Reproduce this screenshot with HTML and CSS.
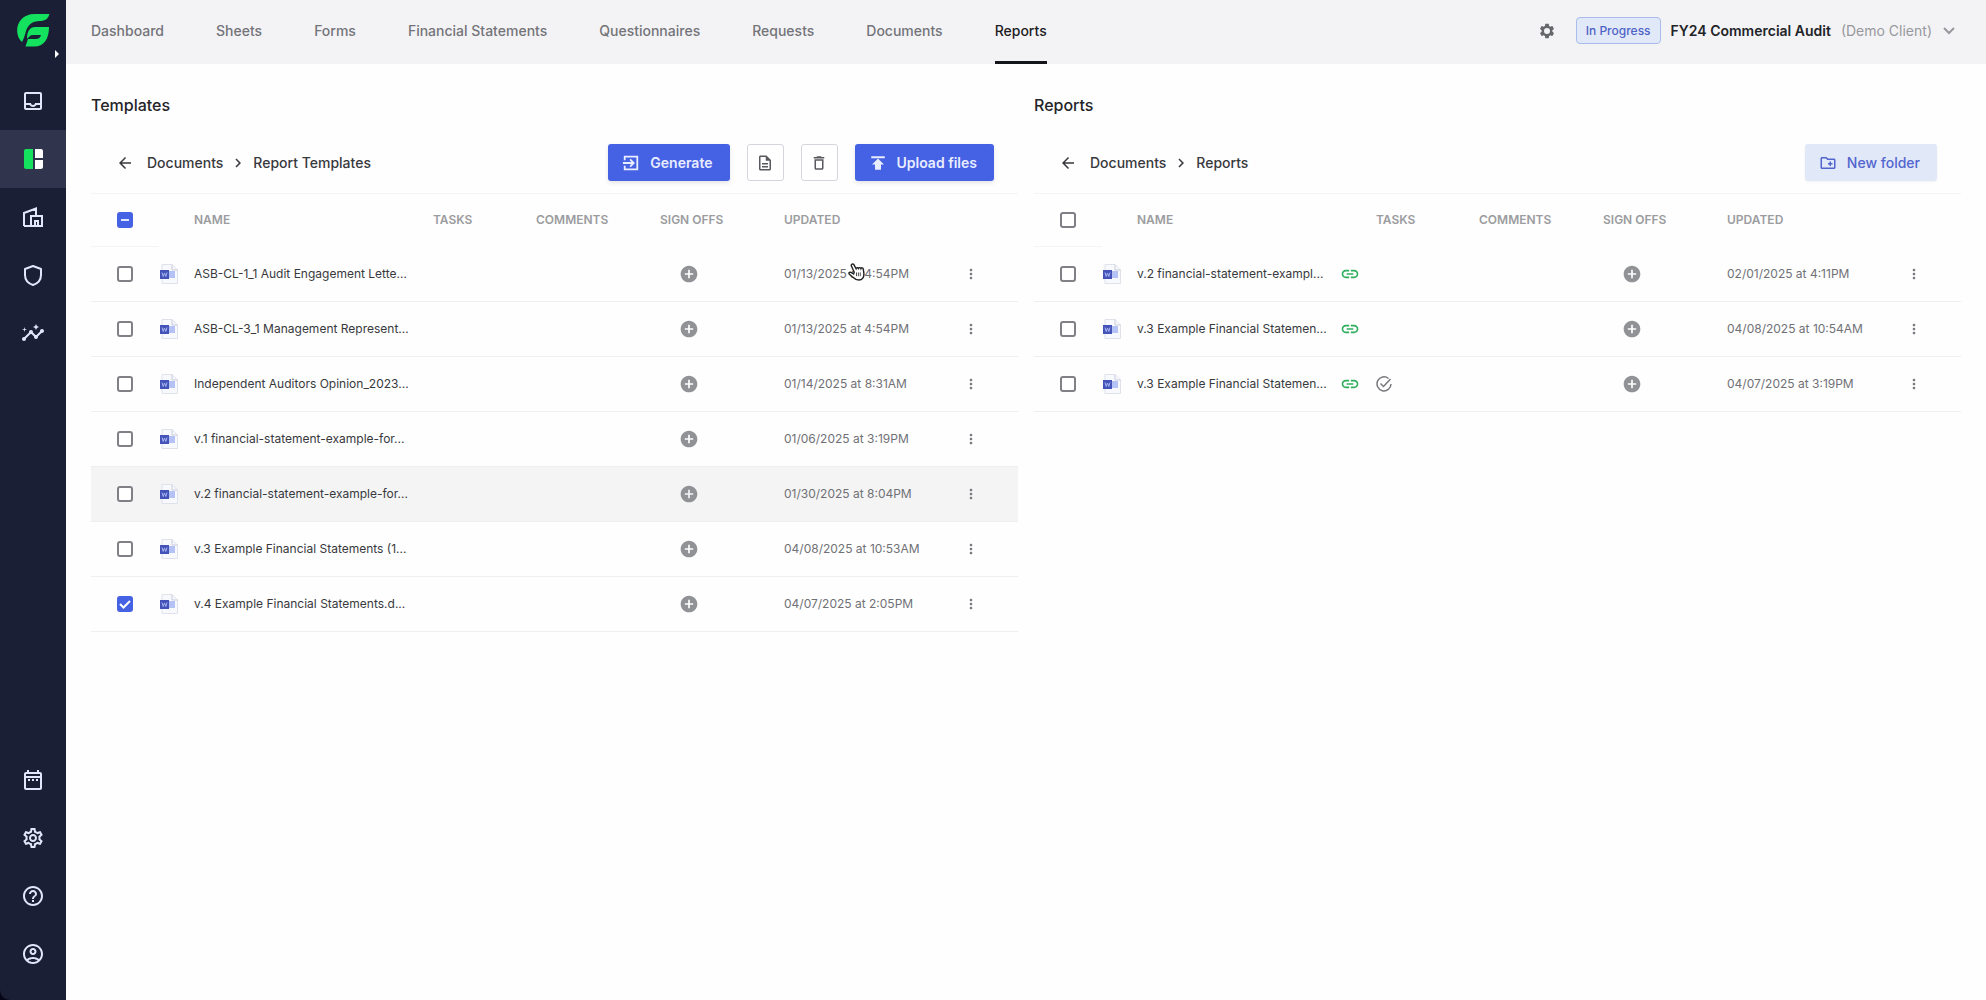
FILE: index.html
```html
<!DOCTYPE html>
<html lang="en">
<head>
<meta charset="utf-8">
<meta name="viewport" content="width=device-width, initial-scale=1">
<title>Reports – FY24 Commercial Audit</title>
<link rel="stylesheet" href="styles.css">
</head>
<body>
<svg class="sprite" aria-hidden="true">
  <symbol id="i-doc" viewBox="0 0 20 20">
    <path d="M3 .5h10l5.500 5.500v13.500H3z" fill="#f8f9fd" stroke="#dfe1eb"/>
    <path d="M13 .5V6h5.500" fill="none" stroke="#c9ccdb"/>
    <path d="M10 7h6v7h-6z" fill="#b4c2f5"/>
    <path d="M1 6h9v9H1z" fill="#4453b8"/>
    <path d="M3 8.500l1.200 4 1.300-3.500 1.300 3.500L8 8.500" fill="none" stroke="#a9b5f0"/>
  </symbol>
  <symbol id="i-plus" viewBox="0 0 24 24"><path fill="currentColor" d="M12 2C6.480 2 2 6.480 2 12s4.480 10 10 10 10-4.480 10-10S17.520 2 12 2zm5 11h-4v4h-2v-4H7v-2h4V7h2v4h4v2z"/></symbol>
  <symbol id="i-more" viewBox="0 0 24 24"><path fill="currentColor" d="M12 8c1.100 0 2-.9 2-2s-.9-2-2-2-2 .9-2 2 .9 2 2 2zm0 2c-1.100 0-2 .9-2 2s.9 2 2 2 2-.9 2-2-.9-2-2-2zm0 6c-1.100 0-2 .9-2 2s.9 2 2 2 2-.9 2-2-.9-2-2-2z"/></symbol>
  <symbol id="i-link" viewBox="0 0 24 24"><path fill="currentColor" d="M3.900 12c0-1.710 1.390-3.100 3.100-3.100h4V7H7c-2.760 0-5 2.240-5 5s2.240 5 5 5h4v-1.900H7c-1.710 0-3.100-1.390-3.100-3.100zM8 13h8v-2H8v2zm9-6h-4v1.900h4c1.710 0 3.100 1.390 3.100 3.100s-1.390 3.100-3.100 3.100h-4V17h4c2.760 0 5-2.240 5-5s-2.240-5-5-5z"/></symbol>
  <symbol id="i-back" viewBox="0 0 24 24"><path fill="currentColor" d="M20 11H7.830l5.590-5.590L12 4l-8 8 8 8 1.410-1.410L7.830 13H20v-2z"/></symbol>
  <symbol id="i-next" viewBox="0 0 24 24"><path fill="currentColor" d="M10 6L8.590 7.410 13.170 12l-4.580 4.590L10 18l6-6z"/></symbol>
</svg>

<div class="app">
  <aside class="sidebar">
    <a class="logo" href="#" aria-label="Home">
      <svg viewBox="0 0 34 34"><g fill="#14e25f"><path d="M33.500 1C32 6 29 8 24 8c-8 0-12 4-14 10-1 4-2 7-4 11C-3 21 0 1 19 1z"/><path d="M33 14c0 12-5 19.500-15 19.500H9.500L12 26h7c4 0 5-1 6-4h-8c-3 0-4 2-6 4 0-8 3-12 8-12z"/></g></svg>
    </a>
    <button class="expand" type="button" aria-label="Expand menu"></button>
    <nav class="rail" aria-label="Workspace">
      <a href="#" aria-label="Inbox"><svg viewBox="0 0 24 24"><path fill="currentColor" d="M19 3H5c-1.100 0-2 .9-2 2v14c0 1.100.9 2 2 2h14c1.100 0 2-.9 2-2V5c0-1.100-.9-2-2-2zm0 16H5v-3h3.560c.69 1.190 1.970 2 3.450 2s2.750-.81 3.450-2H19v3zm0-5h-4.990c0 1.100-.9 2-2 2s-2-.9-2-2H5V5h14v9z"/></svg></a>
      <a href="#" class="active" aria-label="Engagements" aria-current="page"><svg viewBox="0 0 24 24"><path fill="#14e25f" d="M12 22H5c-1.100 0-2-.9-2-2V4c0-1.100.9-2 2-2h7z"/><path fill="#fff" d="M14 2h6c1.100 0 2 .9 2 2v7h-8zM14 13h8v7c0 1.100-.9 2-2 2h-6z"/></svg></a>
      <a href="#" aria-label="Clients"><svg viewBox="0 0 24 24"><path fill="none" stroke="currentColor" stroke-width="2" d="M3 21V8l12-4.500V10M3 21h18V11H10v10M14 21v-5h3v5"/></svg></a>
      <a href="#" aria-label="Security"><svg viewBox="0 0 24 24"><path fill="none" stroke="currentColor" stroke-width="2" stroke-linejoin="round" d="M12 3l8 3v6c0 5-3.500 8.500-8 10-4.500-1.500-8-5-8-10V6z"/></svg></a>
      <a href="#" aria-label="Insights"><svg viewBox="0 0 24 24"><path fill="currentColor" d="M21 8c-1.450 0-2.260 1.440-1.930 2.510l-3.550 3.560c-.3-.09-.74-.09-1.040 0l-2.550-2.550C12.270 10.450 11.460 9 10 9c-1.450 0-2.270 1.440-1.930 2.520l-4.560 4.550C2.440 15.740 1 16.550 1 18c0 1.100.9 2 2 2 1.450 0 2.260-1.440 1.930-2.510l4.550-4.560c.3.090.74.090 1.040 0l2.550 2.550C12.730 16.550 13.540 18 15 18c1.450 0 2.270-1.440 1.930-2.520l3.560-3.550C21.560 12.260 23 11.450 23 10c0-1.100-.9-2-2-2zM15 9l.94-2.070L18 6l-2.060-.93L15 3l-.92 2.070L12 6l2.080.93zM3.500 11L4 9l2-.5L4 8l-.5-2L3 8l-2 .5L3 9z"/></svg></a>
    </nav>
    <nav class="rail rail-bottom" aria-label="Account">
      <a href="#" aria-label="Calendar"><svg viewBox="0 0 24 24"><path fill="currentColor" d="M19 4h-1V2h-2v2H8V2H6v2H5c-1.100 0-2 .9-2 2v14c0 1.100.9 2 2 2h14c1.100 0 2-.9 2-2V6c0-1.100-.9-2-2-2zm0 16H5V10h14v10zM5 8V6h14v2zM7 11h2v2H7zM11 11h2v2h-2zM15 11h2v2h-2z"/></svg></a>
      <a href="#" aria-label="Settings"><svg viewBox="0 0 24 24"><path fill="currentColor" d="M19.430 12.980c.04-.32.07-.64.07-.98s-.03-.66-.07-.98l2.110-1.650c.19-.15.24-.42.12-.64l-2-3.460c-.09-.16-.26-.25-.44-.25-.06 0-.12.010-.17.030l-2.490 1c-.52-.4-1.080-.73-1.690-.98l-.38-2.650C14.460 2.180 14.250 2 14 2h-4c-.25 0-.46.18-.49.42l-.38 2.650c-.61.25-1.170.59-1.690.98l-2.490-1c-.06-.02-.12-.03-.18-.03-.17 0-.34.09-.43.25l-2 3.460c-.13.22-.07.49.12.64l2.110 1.650c-.04.32-.07.65-.07.98s.03.66.07.98l-2.110 1.650c-.19.15-.24.42-.12.64l2 3.460c.09.16.26.25.44.25.06 0 .12-.01.17-.03l2.490-1c.52.4 1.080.73 1.690.98l.38 2.650c.03.24.24.42.49.42h4c.25 0 .46-.18.49-.42l.38-2.650c.61-.25 1.170-.59 1.690-.98l2.490 1c.06.02.12.03.18.03.17 0 .34-.09.43-.25l2-3.460c.12-.22.07-.49-.12-.64l-2.110-1.650zm-1.980-1.710c.04.31.05.52.05.73s-.02.43-.05.73l-.14 1.130.89.7 1.080.84-.7 1.210-1.270-.51-1.040-.42-.9.68c-.43.32-.84.56-1.250.73l-1.060.43-.16 1.130-.2 1.350h-1.400l-.19-1.350-.16-1.130-1.060-.43c-.43-.18-.83-.41-1.230-.71l-.91-.7-1.060.43-1.270.51-.7-1.210 1.080-.84.89-.7-.14-1.130c-.03-.31-.05-.54-.05-.74s.02-.43.05-.73l.14-1.130-.89-.7-1.080-.84.7-1.210 1.270.51 1.040.42.9-.68c.43-.32.84-.56 1.250-.73l1.060-.43.16-1.130.2-1.350h1.390l.19 1.350.16 1.130 1.060.43c.43.18.83.41 1.230.71l.91.7 1.060-.43 1.270-.51.7 1.210-1.070.85-.89.7.14 1.130zM12 8c-2.210 0-4 1.790-4 4s1.790 4 4 4 4-1.790 4-4-1.790-4-4-4zm0 6c-1.100 0-2-.9-2-2s.9-2 2-2 2 .9 2 2-.9 2-2 2z"/></svg></a>
      <a href="#" aria-label="Help"><svg viewBox="0 0 24 24"><path fill="currentColor" d="M11 18h2v-2h-2v2zm1-16C6.480 2 2 6.480 2 12s4.480 10 10 10 10-4.480 10-10S17.520 2 12 2zm0 18c-4.410 0-8-3.590-8-8s3.590-8 8-8 8 3.590 8 8-3.590 8-8 8zm0-14c-2.210 0-4 1.790-4 4h2c0-1.100.9-2 2-2s2 .9 2 2c0 2-3 1.750-3 5h2c0-2.250 3-2.500 3-5 0-2.210-1.790-4-4-4z"/></svg></a>
      <a href="#" aria-label="Profile"><svg viewBox="0 0 24 24"><path fill="currentColor" d="M12 2C6.480 2 2 6.480 2 12s4.480 10 10 10 10-4.480 10-10S17.520 2 12 2zM7.350 18.500C8.660 17.560 10.260 17 12 17s3.340.56 4.650 1.500C15.340 19.440 13.740 20 12 20s-3.340-.56-4.650-1.500zm10.790-1.380C16.450 15.800 14.320 15 12 15s-4.450.8-6.140 2.120C4.700 15.730 4 13.950 4 12c0-4.420 3.580-8 8-8s8 3.580 8 8c0 1.950-.7 3.730-1.860 5.120zM12 6c-1.930 0-3.500 1.570-3.500 3.500S10.070 13 12 13s3.500-1.570 3.500-3.500S13.930 6 12 6zm0 5c-.83 0-1.500-.67-1.500-1.500S11.170 8 12 8s1.500.67 1.500 1.500S12.830 11 12 11z"/></svg></a>
    </nav>
  </aside>

  <div class="page">
    <header class="topbar">
      <nav class="tabs" aria-label="Engagement">
        <a href="#">Dashboard</a><a href="#">Sheets</a><a href="#">Forms</a><a href="#">Financial Statements</a><a href="#">Questionnaires</a><a href="#">Requests</a><a href="#">Documents</a><a href="#" class="current" aria-current="page">Reports</a>
      </nav>
      <div class="engagement">
        <button class="gear" type="button" aria-label="Engagement settings"><svg viewBox="0 0 24 24"><path fill="currentColor" fill-rule="evenodd" d="M19.140 12.940c.04-.3.060-.61.060-.94 0-.32-.02-.64-.07-.94l2.030-1.580c.18-.14.23-.41.12-.61l-1.920-3.320c-.12-.22-.37-.29-.59-.22l-2.390.96c-.5-.38-1.030-.7-1.620-.94L14.400 2.810c-.04-.24-.24-.41-.48-.41h-3.840c-.24 0-.43.17-.47.41L9.250 5.350c-.59.24-1.130.57-1.620.94l-2.390-.96c-.22-.08-.47 0-.59.22L2.740 8.870c-.12.21-.08.47.12.61l2.030 1.580c-.05.3-.09.63-.09.94s.02.64.07.94l-2.030 1.580c-.18.14-.23.41-.12.61l1.920 3.320c.12.22.37.29.59.22l2.390-.96c.5.38 1.030.7 1.620.94l.36 2.540c.05.24.24.41.48.41h3.840c.24 0 .44-.17.47-.41l.36-2.540c.59-.24 1.130-.56 1.620-.94l2.390.96c.22.080.47 0 .59-.22l1.920-3.320c.12-.22.070-.47-.12-.61zM12 16a4 4 0 1 1 0-8 4 4 0 0 1 0 8z"/></svg></button>
        <span class="status">In Progress</span>
        <button class="picker" type="button"><span class="job">FY24 Commercial Audit</span><span class="client">(Demo Client)</span><svg viewBox="0 0 14 14"><path fill="none" stroke="currentColor" stroke-width="2" d="M2 4l5 5 5-5"/></svg></button>
      </div>
    </header>

    <main class="panels">
      <section class="panel">
        <h2>Templates</h2>
        <div class="toolbar">
          <nav class="crumbs" aria-label="Template folder">
            <a href="#" aria-label="Back"><svg class="i18"><use href="#i-back"/></svg></a>
            <a href="#">Documents</a><svg class="i18"><use href="#i-next"/></svg><span>Report Templates</span>
          </nav>
          <div class="actions">
            <button class="btn primary" type="button"><svg viewBox="0 0 20 20"><path fill="none" stroke="currentColor" stroke-width="2" d="M3 7V3h14v14H3v-4M1 10h12M9 6l4 4-4 4"/></svg>Generate</button>
            <button class="btn icon" type="button" aria-label="New template"><svg viewBox="0 0 24 24"><path fill="currentColor" d="M8 16h8v2H8zm0-4h8v2H8zm6-10H6c-1.100 0-2 .9-2 2v16c0 1.100.89 2 1.990 2H18c1.100 0 2-.9 2-2V8l-6-6zm4 18H6V4h7v5h5v11z"/></svg></button>
            <button class="btn icon" type="button" aria-label="Delete"><svg viewBox="0 0 24 24"><path fill="currentColor" d="M6 19c0 1.100.9 2 2 2h8c1.100 0 2-.9 2-2V7H6v12zM8 9h8v10H8V9zm7.500-5l-1-1h-5l-1 1H5v2h14V4h-3.500z"/></svg></button>
            <button class="btn primary" type="button"><svg viewBox="0 0 24 24"><path fill="currentColor" d="M3 3h18v2.500H3zM12 6l8 8h-4v7H8v-7H4z"/></svg>Upload files</button>
          </div>
        </div>
        <table class="files" id="templates">
          <colgroup><col class="c-check"><col class="c-type"><col class="c-name"><col class="c-tasks"><col class="c-comments"><col class="c-sign"><col class="c-updated"><col class="c-more"></colgroup>
          <thead><tr><th><input type="checkbox" class="mixed" aria-label="Select all templates"></th><th></th><th>NAME</th><th>TASKS</th><th>COMMENTS</th><th>SIGN OFFS</th><th>UPDATED</th><th></th></tr></thead>
          <tbody></tbody>
        </table>
      </section>

      <section class="panel">
        <h2>Reports</h2>
        <div class="toolbar">
          <nav class="crumbs" aria-label="Report folder">
            <a href="#" aria-label="Back"><svg class="i18"><use href="#i-back"/></svg></a>
            <a href="#">Documents</a><svg class="i18"><use href="#i-next"/></svg><span>Reports</span>
          </nav>
          <div class="actions">
            <button class="btn soft" type="button"><svg viewBox="0 0 24 24"><path fill="currentColor" d="M20 6h-8l-2-2H4c-1.110 0-1.990.89-1.990 2L2 18c0 1.110.89 2 2 2h16c1.110 0 2-.89 2-2V8c0-1.110-.89-2-2-2zm0 12H4V6h5.170l2 2H20v10zm-8-4h2v2h2v-2h2v-2h-2v-2h-2v2h-2z"/></svg>New folder</button>
          </div>
        </div>
        <table class="files" id="reports">
          <colgroup><col class="c-check"><col class="c-type"><col class="c-name"><col class="c-tasks"><col class="c-comments"><col class="c-sign"><col class="c-updated"><col class="c-more"></colgroup>
          <thead><tr><th><input type="checkbox" aria-label="Select all reports"></th><th></th><th>NAME</th><th>TASKS</th><th>COMMENTS</th><th>SIGN OFFS</th><th>UPDATED</th><th></th></tr></thead>
          <tbody></tbody>
        </table>
      </section>
    </main>
  </div>
</div>
<script src="app.js"></script>
</body>
</html>
```
FILE: styles.css
```css
* { box-sizing: border-box; }
body { margin: 0; background: #050616; color: #38393d; font: 12px/20px Inter, "Liberation Sans", sans-serif; }
a { color: inherit; text-decoration: none; }
button { display: block; font: inherit; color: inherit; border: 0; padding: 0; background: none; cursor: pointer; }
svg { display: block; flex: none; }
.sprite { position: absolute; width: 0; height: 0; }

.app { display: flex; min-height: 100vh; }
.page { flex: 1; min-width: 0; background: #fefefe; }

/* Left rail */
.sidebar { position: relative; width: 66px; flex: none; display: flex; flex-direction: column; background: #1b1f36; color: #e3e6fb; border-bottom-left-radius: 10px; }
.logo { display: flex; justify-content: center; height: 72px; padding-top: 13px; }
.logo svg { width: 34px; height: 34px; }
.expand { position: absolute; left: 55px; top: 50px; border: solid transparent; border-width: 4px 0 4px 4px; border-left-color: #fff; }
.rail { display: flex; flex-direction: column; }
.rail a { display: flex; align-items: center; justify-content: center; height: 58px; }
.rail svg { width: 24px; height: 24px; }
.rail .active { background: #31344d; }
.rail-bottom { margin-top: auto; padding-bottom: 17px; }

/* Top bar */
.topbar { display: flex; justify-content: space-between; height: 64px; padding: 0 30px 0 25px; background: #f3f3f6; }
.tabs { display: flex; gap: 52px; font-size: 14px; font-weight: 500; color: #737479; }
.tabs a { display: flex; align-items: center; border-bottom: 3px solid transparent; white-space: nowrap; }
.tabs .current { color: #1d1d22; border-color: #15151c; }
.engagement { display: flex; align-items: center; white-space: nowrap; padding-bottom: 3px; }
.gear { color: #66676b; margin-right: 20px; }
.gear svg { width: 18px; height: 18px; }
.status { height: 27px; padding: 0 9px; margin-right: 10px; border: 1px solid #a9bcec; border-radius: 4px; background: #e1e9f8; color: #4f62c6; font-weight: 500; line-height: 25px; }
.picker { display: flex; align-items: center; gap: 10px; font-size: 14px; }
.picker .job { color: #222327; font-weight: 600; }
.picker .client, .picker svg { color: #97989c; }
.picker svg { width: 14px; height: 14px; }

/* Panels */
.panels { display: grid; grid-template-columns: 1fr 1fr; gap: 16px; padding: 27px 25px; }
.panel { min-width: 0; }
h2 { margin: 0; color: #242428; font-size: 16px; line-height: 28px; font-weight: 500; }
.toolbar { display: flex; align-items: center; justify-content: space-between; height: 74px; padding: 25px 24px 12px 25px; }
.crumbs { display: flex; align-items: center; gap: 6px; font-size: 14px; font-weight: 500; white-space: nowrap; }
.crumbs a:first-child { margin-right: 7px; }
.i18 { width: 18px; height: 18px; }
.actions { display: flex; gap: 17px; }
.btn { display: flex; align-items: center; height: 37px; gap: 10px; padding: 0 17px 0 14px; border-radius: 3px; font-size: 14px; font-weight: 600; white-space: nowrap; }
.btn svg { width: 18px; height: 18px; }
.primary { background: #4561e4; color: #e9edff; box-shadow: 0 2px 4px #0000001a; }
.icon { width: 37px; padding: 0; justify-content: center; border: 1px solid #d5d5dd; color: #58595e; background: #fff; }
.soft { font-weight: 500; background: #e1e8f7; color: #5265cf; box-shadow: 0 1px 3px #0000000d; }

/* File tables */
.files { width: 100%; table-layout: fixed; border-collapse: collapse; border-top: 1px solid #f4f4f5; }
.c-check { width: 68px; } .c-type { width: 35px; } .c-name { width: 239px; } .c-tasks { width: 103px; }
.c-comments { width: 124px; } .c-sign { width: 124px; } .c-updated { width: 179px; }
.files th, .files td { padding: 0; text-align: left; }
.files th { height: 53px; color: #9b9ca0; font-weight: 600; }
.files td { height: 55px; border-bottom: 1px solid #efeff0; white-space: nowrap; }
.files th:first-child { border-bottom: 1px solid #f4f4f5; }
.files th:first-child, .files td:first-child { padding-left: 26px; }
.hovered { background: #f4f4f5; }
.files input { appearance: none; display: block; width: 16px; height: 16px; margin: 0; border: 2px solid #808186; border-radius: 3px; background: #fff center/12px 12px no-repeat; }
.files input:checked, .files input.mixed { border-color: #4561e4; background-color: #4561e4; }
.files input.mixed { background-image: linear-gradient(#dfe5ff, #dfe5ff); background-size: 8px 2px; }
.files input:checked { background-image: url("data:image/svg+xml,%3Csvg xmlns='http://www.w3.org/2000/svg' viewBox='0 0 12 12'%3E%3Cpath d='M1 6l3.500 3.500L11 3' fill='none' stroke='white' stroke-width='2'/%3E%3C/svg%3E"); }
.doc { width: 20px; height: 20px; }
.name { display: flex; align-items: center; justify-content: space-between; padding-right: 16px; }
.linked { width: 20px; height: 20px; color: #2fae5e; }
.task { width: 16px; height: 16px; color: #77787c; }
.sign svg { width: 20px; height: 20px; color: #919296; margin-left: 19px; }
.updated { color: #707176; }
.more svg { width: 16px; height: 16px; color: #77787d; }
.cell { position: relative; }
.pointer { position: absolute; left: 64px; top: -2px; width: 17px; height: 19px; }
```
FILE: app.js
```js
const templates = [
  { name: "ASB-CL-1_1 Audit Engagement Lette...", updated: "01/13/2025 at 4:54PM", pointer: true },
  { name: "ASB-CL-3_1 Management Represent...", updated: "01/13/2025 at 4:54PM" },
  { name: "Independent Auditors Opinion_2023...", updated: "01/14/2025 at 8:31AM" },
  { name: "v.1 financial-statement-example-for...", updated: "01/06/2025 at 3:19PM" },
  { name: "v.2 financial-statement-example-for...", updated: "01/30/2025 at 8:04PM", hovered: true },
  { name: "v.3 Example Financial Statements (1...", updated: "04/08/2025 at 10:53AM" },
  { name: "v.4 Example Financial Statements.d...", updated: "04/07/2025 at 2:05PM", checked: true }
];
const reports = [
  { name: "v.2 financial-statement-exampl...", updated: "02/01/2025 at 4:11PM", linked: true },
  { name: "v.3 Example Financial Statemen...", updated: "04/08/2025 at 10:54AM", linked: true },
  { name: "v.3 Example Financial Statemen...", updated: "04/07/2025 at 3:19PM", linked: true, task: true }
];

const link = '<svg class="linked"><use href="#i-link"/></svg>';
const task = '<svg class="task" viewBox="0 0 16 16"><path d="M12.500 2.500A7 7 0 1 0 15 8M4.500 7.500l3 3 7-7.500" fill="none" stroke="currentColor" stroke-width="1.500"/></svg>';
const hand = '<svg class="pointer" viewBox="0 0 18 20"><path d="M6.500 10.500L3.500 4a1.500 1.500 0 0 1 2.700-1.200L8.500 7a1.400 1.400 0 0 1 2.600-.3 1.400 1.400 0 0 1 2.600.2 1.300 1.300 0 0 1 2.500.6l.6 4.500c.3 4-1.500 7-5.300 7s-5-1.500-7-3.500l-3-2.500c-1.300-1.500.3-2.700 1.500-2l3 1.500z" fill="#fff" stroke="#222" stroke-width="1.500"/><path d="M9 11v4M11 11v4M13 11v4" stroke="#444"/></svg>';

const row = f => `<tr class="${f.hovered ? "hovered" : ""}">
  <td><input type="checkbox" aria-label="Select ${f.name}" ${f.checked ? "checked" : ""}></td>
  <td><svg class="doc"><use href="#i-doc"/></svg></td>
  <td><div class="name"><a href="#">${f.name}</a>${f.linked ? link : ""}</div></td>
  <td>${f.task ? task : ""}</td>
  <td></td>
  <td class="sign"><button type="button" aria-label="Add sign off"><svg><use href="#i-plus"/></svg></button></td>
  <td class="updated"><div class="cell">${f.updated}${f.pointer ? hand : ""}</div></td>
  <td class="more"><button type="button" aria-label="More actions"><svg><use href="#i-more"/></svg></button></td>
</tr>`;

document.querySelector("#templates tbody").innerHTML = templates.map(row).join("");
document.querySelector("#reports tbody").innerHTML = reports.map(row).join("");
```
